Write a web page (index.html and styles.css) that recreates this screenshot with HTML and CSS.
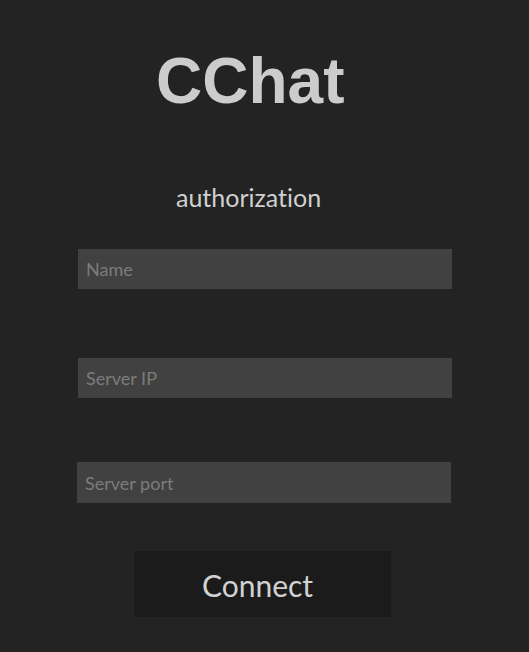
FILE: index.html
```html
<!DOCTYPE html>
<html lang="en">
<head>
<meta charset="utf-8">
<title>CChat</title>
<link rel="stylesheet" href="styles.css">
</head>
<body>
<main class="page">
  <h1 class="title">CChat</h1>
  <p class="subtitle">authorization</p>
  <form class="form">
    <input class="field field-name" type="text" placeholder="Name">
    <input class="field field-ip" type="text" placeholder="Server IP">
    <input class="field field-port" type="text" placeholder="Server port">
    <button class="connect" type="button">Connect</button>
  </form>
</main>
</body>
</html>
```
FILE: styles.css
```css
html, body {
  margin: 0;
  padding: 0;
  background: #232323;
}
.page {
  width: 529px;
  height: 652px;
  display: flex;
  flex-direction: column;
  font-variant-ligatures: none;
}
.title {
  margin: 49px 0 0 156px;
  font-family: "Liberation Sans", Arial, sans-serif;
  font-weight: bold;
  font-size: 64px;
  line-height: 64px;
  color: #cccccc;
  align-self: flex-start;
}
.subtitle {
  margin: 70px 0 0 176px;
  font-family: Lato, "Open Sans", sans-serif;
  font-size: 25px;
  line-height: 28px;
  color: #d0d0d0;
  align-self: flex-start;
  font-variant-ligatures: none;
}
.form {
  display: flex;
  flex-direction: column;
  align-items: flex-start;
  margin-top: 38px;
}
.field {
  box-sizing: border-box;
  width: 374px;
  height: 40px;
  margin-left: 78px;
  padding: 0 8px;
  border: none;
  outline: none;
  background: #414141;
  font-family: Lato, "Open Sans", sans-serif;
  font-size: 18px;
  color: #cccccc;
  font-variant-ligatures: none;
}
.field::placeholder {
  color: #7c7c7c;
}
.field-ip {
  margin-top: 69px;
}
.field-port {
  margin-top: 64px;
  margin-left: 77px;
  height: 41px;
}
.connect {
  margin: 48px 0 0 134px;
  width: 257px;
  height: 66px;
  border: none;
  background: #1b1b1b;
  font-family: Lato, "Open Sans", sans-serif;
  font-size: 30px;
  color: #d2d2d2;
  padding: 2px 10px 0 0;
  font-variant-ligatures: none;
}
```
